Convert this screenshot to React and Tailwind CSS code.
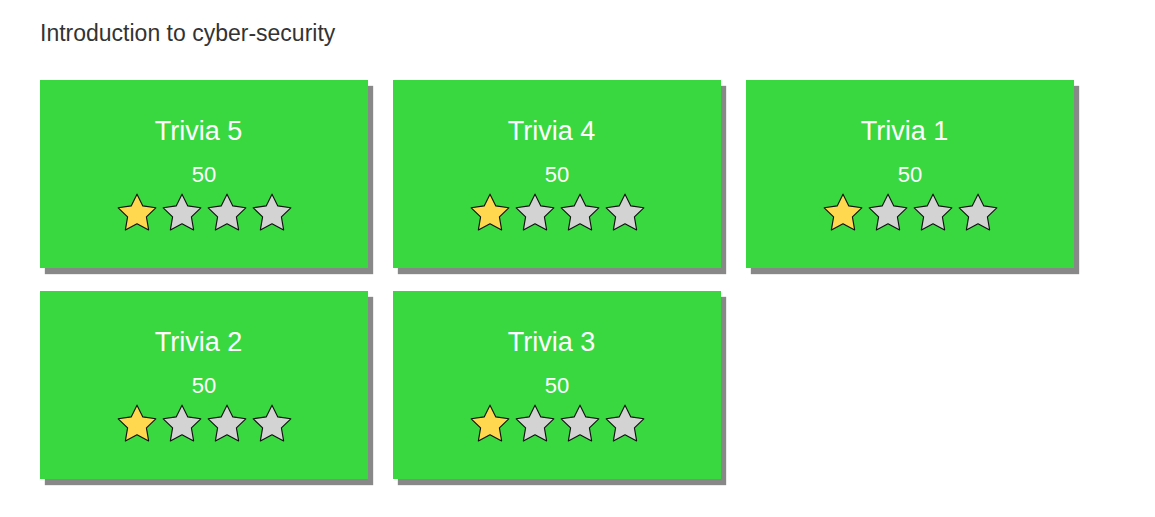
const trivias = [
  { name: 'Trivia 5', points: 50, stars: 1 },
  { name: 'Trivia 4', points: 50, stars: 1 },
  { name: 'Trivia 1', points: 50, stars: 1 },
  { name: 'Trivia 2', points: 50, stars: 1 },
  { name: 'Trivia 3', points: 50, stars: 1 },
];

function Star({ filled }) {
  return (
    <svg width="40" height="38" viewBox="1.4 1.4 21.2 20.2" className="block">
      <polygon
        points="12,2 15.09,8.26 22,9.27 17,14.14 18.18,21.02 12,17.77 5.82,21.02 7,14.14 2,9.27 8.91,8.26"
        fill={filled ? '#ffd84f' : '#d3d3d3'}
        stroke="#111"
        strokeWidth="0.6"
        strokeLinejoin="round"
      />
    </svg>
  );
}

function TriviaCard({ trivia }) {
  return (
    <div className="w-[328px] h-[188px] bg-[#39d840] shadow-[5px_6px_1px_#888] flex flex-col items-center pt-[36px] text-white cursor-pointer">
      <div className="text-[27px] leading-[30px] pr-[11px]">{trivia.name}</div>
      <div className="text-[22px] leading-[26px] mt-[16px]">{trivia.points}</div>
      <div className="flex gap-[5px] mt-[5px]">
        {[0, 1, 2, 3].map((i) => (
          <Star key={i} filled={i < trivia.stars} />
        ))}
      </div>
    </div>
  );
}

export default function App() {
  return (
    <div className="min-h-screen bg-white px-[40px] pt-[20px] font-['Liberation_Sans',Arial,sans-serif]">
      <h2 className="text-[23px] leading-[26px] text-[#333]">Introduction to cyber-security</h2>
      <div className="mt-[34px] grid grid-cols-[repeat(3,328px)] gap-x-[25px] gap-y-[23px]">
        {trivias.map((t) => (
          <TriviaCard key={t.name} trivia={t} />
        ))}
      </div>
    </div>
  );
}
